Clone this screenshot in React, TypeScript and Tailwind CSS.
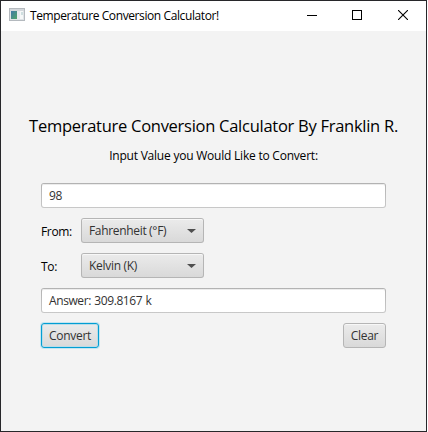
import type { ReactNode } from "react";

function AppIcon() {
  return (
    <svg className="mb-[2px] ml-2 block shrink-0" width="16" height="14" viewBox="0 0 16 14" shapeRendering="crispEdges">
      <defs>
        <linearGradient id="pane" x1="0" y1="0" x2="1" y2="1">
          <stop offset="0" stopColor="#3f78a8" />
          <stop offset="1" stopColor="#4fa568" />
        </linearGradient>
      </defs>
      <rect width="16" height="13" fill="#b4b9be" />
      <rect x="1" y="1" width="14" height="2" fill="#d3d7db" />
      <rect x="1" y="3" width="14" height="9" fill="#dfe3e6" />
      <rect x="2" y="3" width="6" height="8" fill="url(#pane)" />
      <rect x="8" y="3" width="3" height="8" fill="#e6e9ee" />
      <rect x="11" y="3" width="3" height="8" fill="#f6f8f8" />
      <rect x="12" y="4" width="2" height="3" fill="#cfdfe0" />
    </svg>
  );
}

function TitleBar() {
  return (
    <header className="flex h-[30px] shrink-0 items-center bg-white text-black">
      <AppIcon />
      <h1 className="ml-[5px] text-[12px] leading-[16px] tracking-[-0.4px]">Temperature Conversion Calculator!</h1>
      <div className="ml-auto flex">
        <button className="flex h-[30px] w-[46px] items-center justify-center pb-[2px] pl-[2px]" aria-label="Minimize">
          <svg width="10" height="10" shapeRendering="crispEdges">
            <path d="M0 5.5H10" stroke="#000" />
          </svg>
        </button>
        <button className="flex h-[30px] w-[46px] items-center justify-center pb-[2px]" aria-label="Maximize">
          <svg width="10" height="10" shapeRendering="crispEdges">
            <path d="M.5 .5H9.5V9.5H.5Z" fill="none" stroke="#000" />
          </svg>
        </button>
        <button className="flex h-[30px] w-[46px] items-center justify-center pb-[2px]" aria-label="Close">
          <svg width="10" height="10">
            <path d="M0 0L10 10M10 0L0 10" stroke="#000" strokeWidth="1.1" />
          </svg>
        </button>
      </div>
    </header>
  );
}

function Field({ children }: { children: ReactNode }) {
  return (
    <div className="h-[25px] rounded-[3px] bg-linear-to-b from-[#b2b2b2] to-[#c8c8c8] p-px">
      <div className="flex h-full items-center rounded-[2px] bg-white px-[7px] text-[#323232] shadow-[inset_0_1px_0_#ececec]">
        {children}
      </div>
    </div>
  );
}

function Select({ label, children }: { label: string; children: ReactNode }) {
  return (
    <div className="flex h-[25px] items-center">
      <span className="w-10 pt-[2px] tracking-[-0.35px] text-black">{label}</span>
      <div className="h-[25px] w-[123px] rounded-[3px] bg-[#b5b5b5] p-px">
        <div className="flex h-full items-center justify-between rounded-[2px] bg-linear-to-b from-[#ebebeb] to-[#d9d9d9] pr-[7px] pl-[7px] text-[#323232] shadow-[inset_0_1px_0_#f7f7f7]">
          {children}
          <svg width="9" height="4" viewBox="0 0 9 4">
            <path d="M0 0H9L4.5 4Z" fill="#4f4f4f" />
          </svg>
        </div>
      </div>
    </div>
  );
}

export default function App() {
  return (
    <div className="flex h-[432px] w-[427px] flex-col border border-[#27272a] bg-[#f3f3f3] font-['Open_Sans','Noto_Sans',sans-serif] text-[12px] leading-[16px] whitespace-nowrap">
      <TitleBar />
      <main className="flex flex-col px-10 pt-[83px]">
        <h2 className="flex h-[24px] items-center justify-center text-[16.5px] leading-[24px] tracking-[-0.27px] text-black">
          Temperature Conversion Calculator By Franklin R.
        </h2>
        <p className="mt-[10px] text-center tracking-[-0.22px] text-black">Input Value you Would Like to Convert:</p>
        <div className="mt-[19px] flex flex-col gap-[10px]">
          <Field>
            <span className="tracking-[-0.4px]">98</span>
          </Field>
          <Select label="From:">
            <span className="tracking-[-0.33px]">Fahrenheit (°F)</span>
          </Select>
          <Select label="To:">
            <span className="tracking-[-0.3px]">Kelvin (K)</span>
          </Select>
          <Field>
            <span className="tracking-[-0.4px] [word-spacing:0.6px]">Answer: 309.8167 k</span>
          </Field>
          <div className="flex justify-between">
            <button className="h-[25px] w-[58px] rounded-[3px] border border-[#039ed3] bg-linear-to-b from-[#ebebeb] to-[#d9d9d9] tracking-[-0.3px] text-[#323232] shadow-[0_0_0_1px_#c5e5f0,inset_0_0_0_1px_#b9dce8]">
              Convert
            </button>
            <button className="h-[25px] w-[43px] rounded-[3px] border border-[#b5b5b5] bg-linear-to-b from-[#ebebeb] to-[#d9d9d9] tracking-[-0.3px] text-[#323232] shadow-[inset_0_1px_0_#f7f7f7]">
              Clear
            </button>
          </div>
        </div>
      </main>
    </div>
  );
}
